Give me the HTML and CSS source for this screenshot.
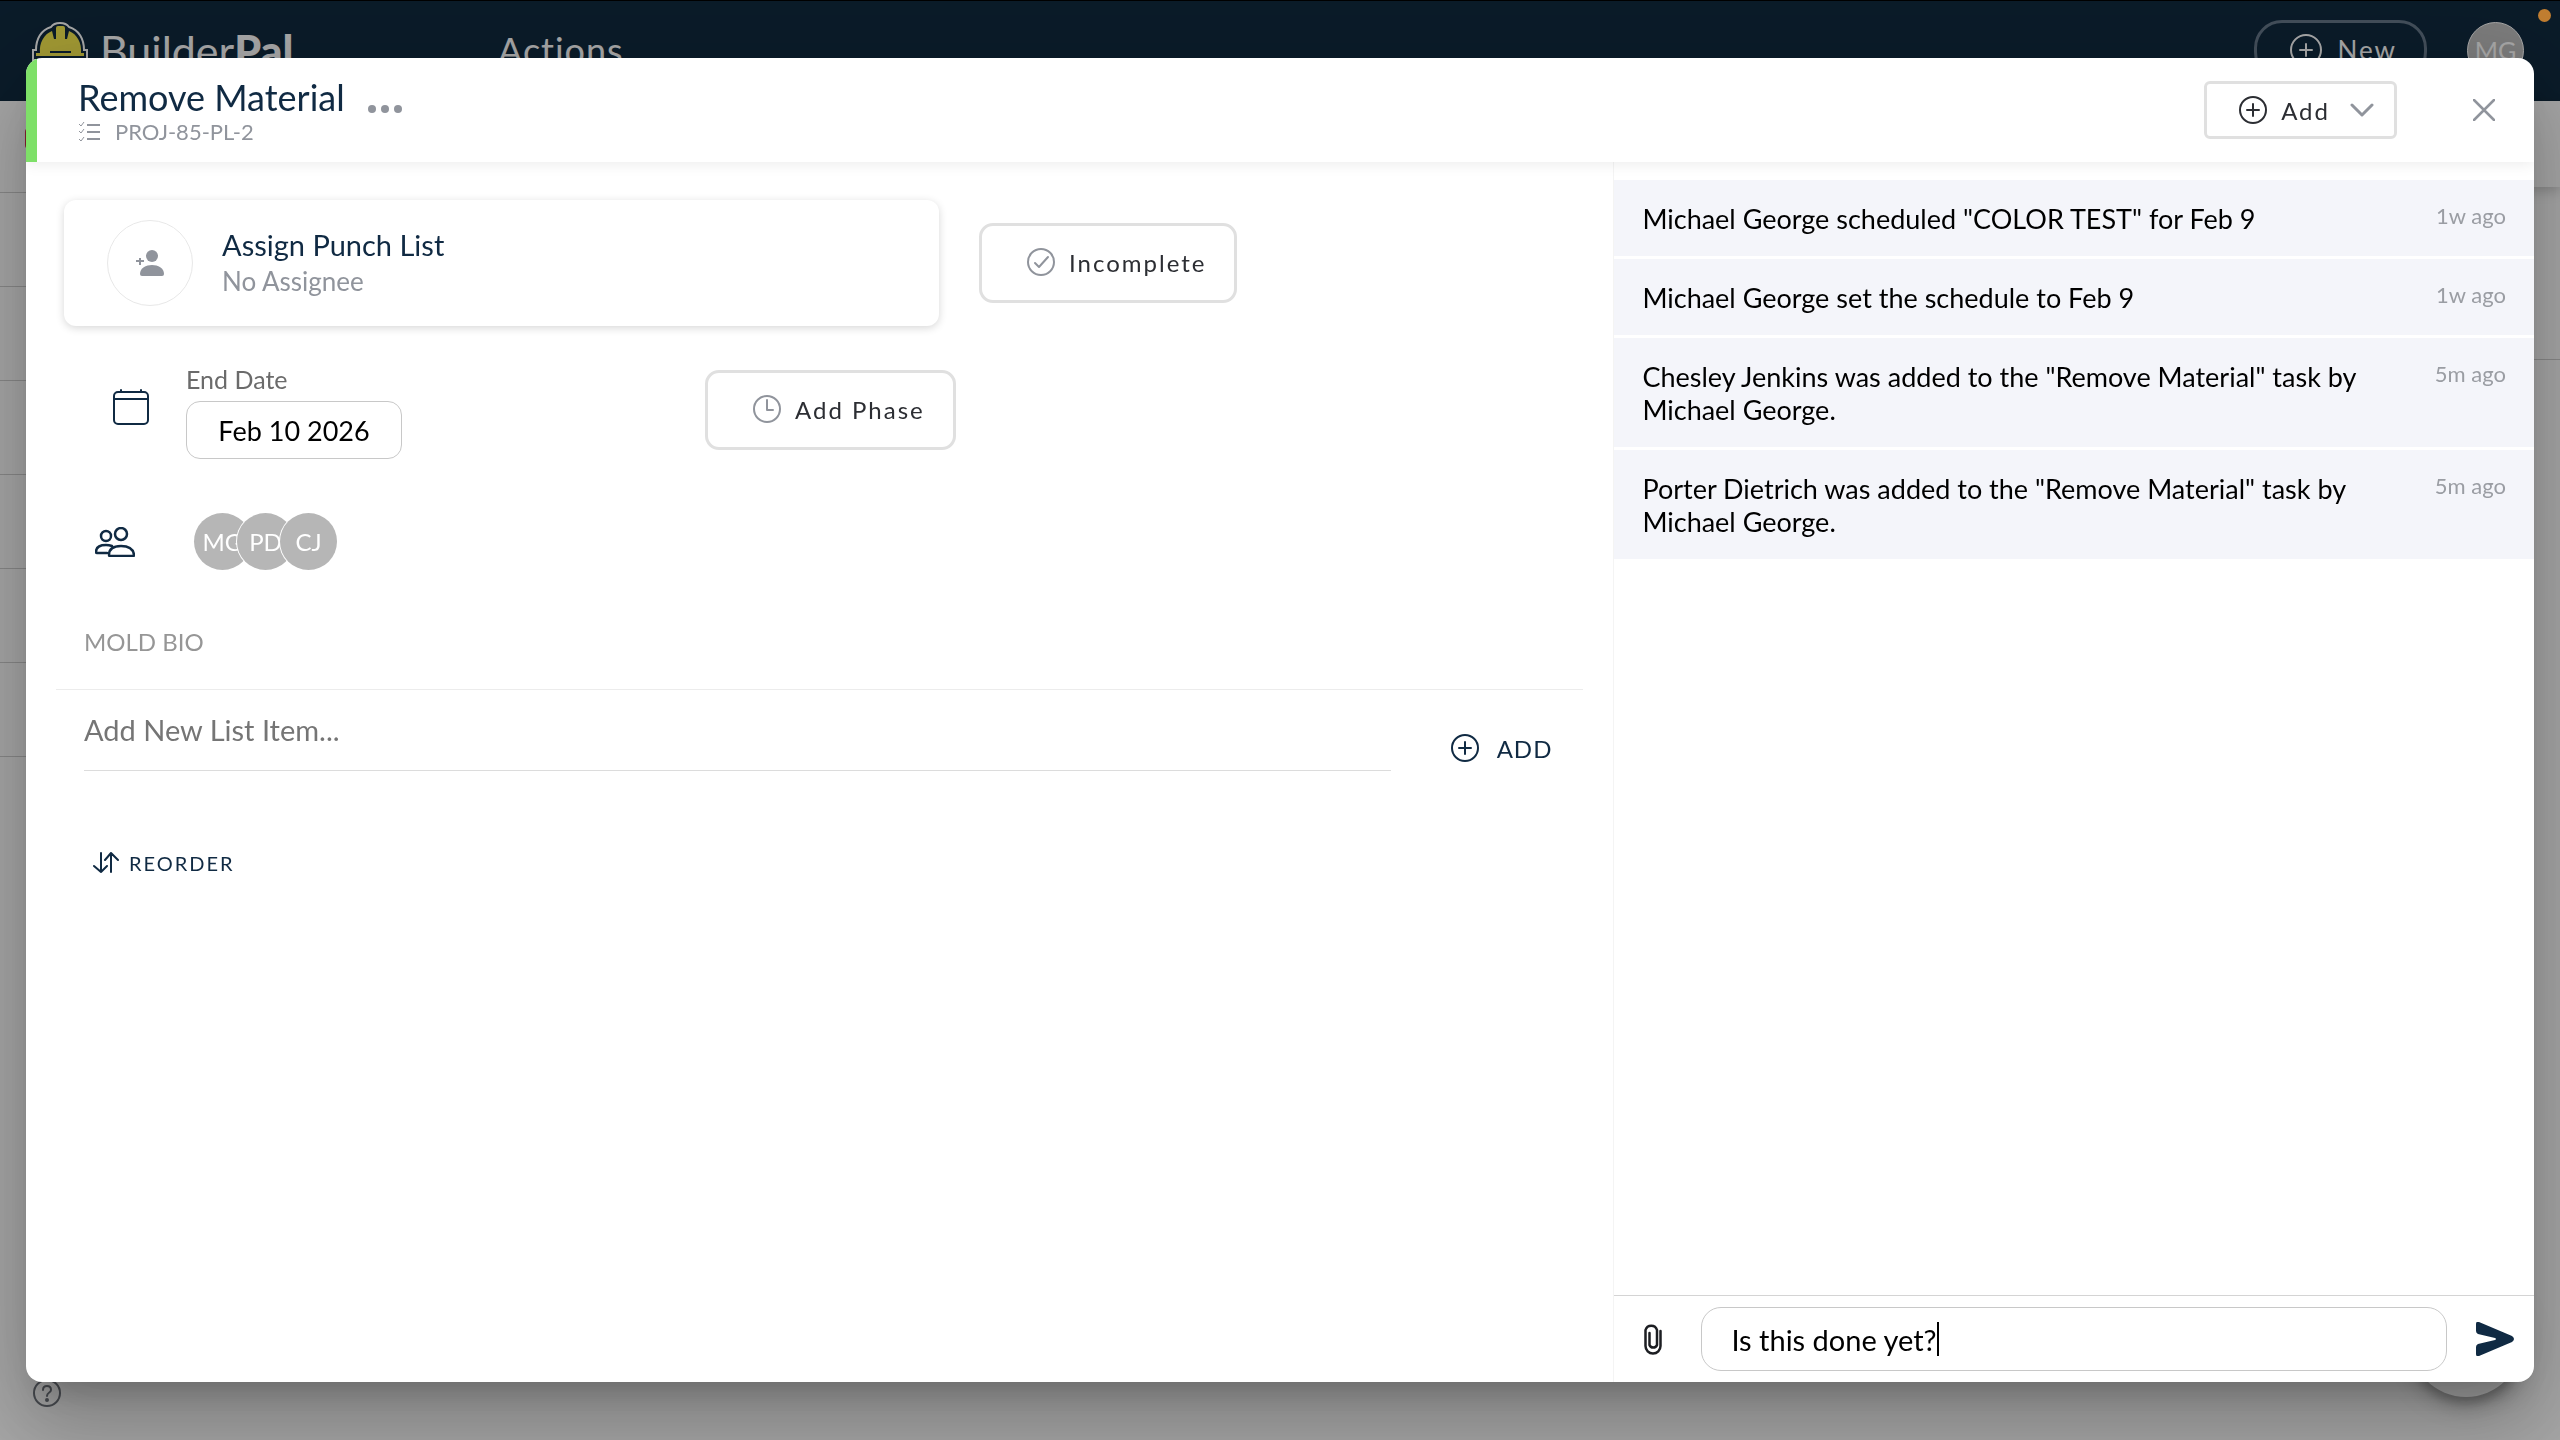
FILE: index.html
```html
<!DOCTYPE html>
<html lang="en">
<head>
  <meta charset="UTF-8">
  <meta name="viewport" content="width=device-width, initial-scale=1.0">
  <title>BuilderPal - Actions</title>
  <link rel="stylesheet" href="styles.css">
</head>
<body>
  <!-- App behind the modal -->
  <div class="app">
    <header class="navbar">
      <a class="brand" href="#">
        <svg class="brand-logo" viewBox="0 0 56 56">
          <path d="M1 38V28H4C4 17 9 8 19 5C21 2 24 1 28 1S35 2 37 5C47 8 52 17 52 28H55V38Z" fill="#102a3f" stroke="#fff" stroke-width="2"/>
          <path d="M8 31C7 21 12 12 20 9L22 17H24V6Q24 4 26 4H31Q33 4 33 6V17H35L37 9C45 12 50 21 49 31Z" fill="#f5e94f"/>
          <path d="M4 31H52V34H4Z" fill="#f5e94f"/>
          <path d="M18 30H39" stroke="#102a3f" stroke-width="2"/>
        </svg>
        <span>Builder<b>Pal</b></span>
      </a>
      <span class="page-title">Actions</span>
      <button class="new-btn" type="button">
        <svg width="32" height="32" viewBox="0 0 32 32" fill="none" stroke="currentColor" stroke-width="2" stroke-linecap="round">
          <circle cx="16" cy="16" r="15"/>
          <path d="M16 10V22M10 16H22"/>
        </svg>
        New
      </button>
      <span class="user-avatar">MG</span>
    </header>
    <div class="workspace">
      <ul class="side-list">
        <li><span class="badge"></span></li>
        <li></li>
        <li></li>
        <li></li>
        <li></li>
        <li></li>
        <li></li>
      </ul>
      <main class="board">
        <div class="toolbar"></div>
        <div class="board-row"></div>
      </main>
    </div>
    <button class="help-btn" type="button" aria-label="Help">
      <svg width="28" height="28" viewBox="0 0 28 28" fill="none" stroke="currentColor" stroke-width="2" stroke-linecap="round">
        <circle cx="14" cy="14" r="13"/>
        <path d="M10 11Q10 7 14 7T18 11C18 14 14 13 14 17"/>
        <circle cx="14" cy="21" r="1"/>
      </svg>
    </button>
    <button class="fab" type="button" aria-label="Chat"></button>
  </div>
  <div class="backdrop"></div>
  <span class="status-dot"></span>

  <section class="modal" role="dialog" aria-labelledby="taskTitle">
    <header class="modal-header">
      <div class="heading">
        <div class="title-row">
          <h1 id="taskTitle">Remove Material</h1>
          <button class="icon-btn more" type="button" aria-label="More">
            <svg width="36" height="10" viewBox="0 0 36 10" fill="currentColor">
              <circle cx="5" cy="5" r="4"/>
              <circle cx="18" cy="5" r="4"/>
              <circle cx="31" cy="5" r="4"/>
            </svg>
          </button>
        </div>
        <div class="task-id">
          <svg width="23" height="22" viewBox="0 0 23 22" fill="none" stroke="currentColor" stroke-width="2">
            <path d="M9 4H22M9 11H22M9 18H22"/>
            <path d="M1 3L3 5L6 1M1 10L3 12L6 8M1 18L3 20L6 16" stroke-width="1"/>
          </svg>
          <span>PROJ-85-PL-2</span>
        </div>
      </div>
      <button class="add-menu" type="button">
        <svg width="28" height="28" viewBox="0 0 28 28" fill="none" stroke="currentColor" stroke-width="2" stroke-linecap="round">
          <circle cx="14" cy="14" r="13"/>
          <path d="M14 8V20M8 14H20"/>
        </svg>
        <span>Add</span>
        <svg class="chevron" width="24" height="14" viewBox="0 0 24 14" fill="none" stroke="currentColor" stroke-width="3" stroke-linecap="round" stroke-linejoin="round">
          <path d="M2 2L12 12L22 2"/>
        </svg>
      </button>
      <button class="icon-btn" type="button" aria-label="Close">
        <svg width="22" height="22" viewBox="0 0 22 22" fill="none" stroke="currentColor" stroke-width="2.5" stroke-linecap="round">
          <path d="M1 1L21 21M21 1L1 21"/>
        </svg>
      </button>
    </header>

    <div class="modal-body">
      <div class="details">
        <div class="assign-row">
          <button class="assign-card" type="button">
            <span class="assign-icon">
              <svg width="28" height="26" viewBox="0 0 28 26" fill="currentColor">
                <circle cx="16" cy="6" r="6"/>
                <path d="M4 24C4 18 10 15 16 15S28 18 28 24Q28 26 26 26H6Q4 26 4 24Z"/>
                <path d="M4 8V15M0 11H8" stroke="currentColor" stroke-width="2"/>
              </svg>
            </span>
            <span class="assign-text">
              <span class="assign-title">Assign Punch List</span>
              <span class="assign-sub">No Assignee</span>
            </span>
          </button>
          <button class="outline-btn" type="button">
            <svg width="28" height="28" viewBox="0 0 28 28" fill="none" stroke="currentColor" stroke-width="2" stroke-linecap="round" stroke-linejoin="round">
              <circle cx="14" cy="14" r="13"/>
              <path d="M8 15L12 19L21 9"/>
            </svg>
            Incomplete
          </button>
        </div>

        <div class="date-row">
          <svg class="row-icon" width="36" height="36" viewBox="0 0 36 36" fill="none" stroke="currentColor" stroke-width="2" stroke-linecap="round">
            <rect x="1" y="3" width="34" height="32" rx="4"/>
            <path d="M1 10H35M8 1V3M28 1V3"/>
          </svg>
          <div class="end-date">
            <label for="endDate">End Date</label>
            <input type="text" id="endDate" value="Feb 10 2026">
          </div>
          <button class="outline-btn" type="button">
            <svg width="28" height="28" viewBox="0 0 28 28" fill="none" stroke="currentColor" stroke-width="2" stroke-linecap="round" stroke-linejoin="round">
              <circle cx="14" cy="14" r="13"/>
              <path d="M14 5V15H20"/>
            </svg>
            Add Phase
          </button>
        </div>

        <div class="people-row">
          <svg width="40" height="30" viewBox="0 0 40 30" fill="none" stroke="currentColor" stroke-width="2.5" stroke-linejoin="round" stroke-linecap="round">
            <ellipse cx="26" cy="7" rx="6" ry="6"/>
            <path d="M14 28Q14 19 26 19T39 28Q39 29 38 29H15Q14 29 14 28Z"/>
            <ellipse cx="11" cy="9" rx="5" ry="5"/>
            <path d="M17 19Q14 18 11 18Q1 18 1 25Q1 26 2 26H12"/>
          </svg>
          <div class="avatars">
            <span>MG</span>
            <span>PD</span>
            <span>CJ</span>
          </div>
        </div>

        <h2 class="list-title">MOLD BIO</h2>
        <form class="new-item">
          <input type="text" placeholder="Add New List Item..." aria-label="Add New List Item">
          <button class="text-btn" type="button">
            <svg width="28" height="28" viewBox="0 0 28 28" fill="none" stroke="currentColor" stroke-width="2" stroke-linecap="round">
              <circle cx="14" cy="14" r="13"/>
              <path d="M14 8V20M8 14H20"/>
            </svg>
            ADD
          </button>
        </form>
        <button class="text-btn reorder" type="button">
          <svg width="26" height="22" viewBox="0 0 26 22" fill="none" stroke="currentColor" stroke-width="2" stroke-linecap="round" stroke-linejoin="round">
            <path d="M8 1V20M1 14L8 20L14 14M18 20V1M12 8L18 1L25 8"/>
          </svg>
          REORDER
        </button>
      </div>

      <aside class="activity">
        <ul class="feed">
          <li>
            <p>Michael George scheduled "COLOR TEST" for Feb 9</p>
            <time>1w ago</time>
          </li>
          <li>
            <p>Michael George set the schedule to Feb 9</p>
            <time>1w ago</time>
          </li>
          <li>
            <p>Chesley Jenkins was added to the "Remove Material" task by Michael George.</p>
            <time>5m ago</time>
          </li>
          <li>
            <p>Porter Dietrich was added to the "Remove Material" task by Michael George.</p>
            <time>5m ago</time>
          </li>
        </ul>
        <form class="composer">
          <button class="icon-btn attach" type="button" aria-label="Attach file">
            <svg width="18" height="32" viewBox="0 0 18 32" fill="none" stroke="currentColor" stroke-width="2.5" stroke-linecap="round">
              <path d="M16.500 8V23A7.500 7.500 0 0 1 1.500 23V7A6 6 0 0 1 13 7V22A4 4 0 0 1 5.500 22V10"/>
            </svg>
          </button>
          <div class="message-box">
            <input type="text" value="Is this done yet?" aria-label="Message">
            <span class="caret"></span>
          </div>
          <button class="icon-btn send" type="submit" aria-label="Send">
            <svg width="38" height="34" viewBox="0 0 38 34" fill="currentColor">
              <path d="M3 0L36 14Q40 17 36 20L3 34Q0 35 0 32V25Q0 23 2 22L19 18Q21 17 19 16L2 12Q0 11 0 9V2Q0 -1 3 0Z"/>
            </svg>
          </button>
        </form>
      </aside>
    </div>
  </section>
</body>
</html>
```
FILE: styles.css
```css
* {
  box-sizing: border-box;
}
body {
  margin: 0;
  font-family: Lato, "Liberation Sans", sans-serif;
  color: #000;
  background-color: #fff;
}
button, input {
  font-family: inherit;
  color: inherit;
  background: none;
  border: none;
  padding: 0;
  outline: none;
}
button {
  cursor: pointer;
}
ul {
  list-style: none;
  margin: 0;
  padding: 0;
}
svg {
  display: block;
  flex: none;
}

/* App */
.app {
  min-height: 100vh;
  display: flex;
  flex-direction: column;
}
.navbar {
  display: flex;
  align-items: center;
  height: 101px;
  padding: 0 36px 2px 32px;
  border-top: 1px solid #000;
  background-color: #102a3f;
  color: #fff;
}
.brand {
  display: flex;
  align-items: center;
  gap: 12px;
  flex: 0 0 466px;
  color: inherit;
  font-size: 43px;
  text-decoration: none;
}
.brand-logo {
  width: 56px;
  height: 56px;
}
.brand b {
  font-weight: 900;
}
.page-title {
  flex: 1;
  font-size: 36px;
  letter-spacing: 1px;
}
.new-btn {
  display: flex;
  align-items: center;
  gap: 16px;
  height: 60px;
  padding: 0 27px 0 33px;
  border: 3px solid #66788a;
  border-radius: 28px;
  font-size: 26px;
  letter-spacing: 2px;
}
.user-avatar {
  display: flex;
  align-items: center;
  justify-content: center;
  width: 57px;
  height: 57px;
  margin-left: 40px;
  border: 1px solid #fff;
  border-radius: 50%;
  background-color: #bdbdbd;
  font-size: 25px;
}
.workspace {
  flex: 1;
  display: grid;
  grid-template-columns: 466px 1fr;
}
.side-list li {
  height: 94px;
  padding: 27px 25px;
  border-bottom: 1px solid #d0d0d0;
}
.side-list li:first-child {
  height: 92px;
}
.badge {
  display: block;
  width: 60px;
  height: 21px;
  border-radius: 4px;
  background-color: #d32f4f;
}
.toolbar {
  height: 86px;
  box-shadow: 0 4px 12px rgba(0, 0, 0, 0.2);
}
.board-row {
  height: 173px;
  border-bottom: 1px solid #d0d0d0;
}
.help-btn {
  position: fixed;
  left: 33px;
  bottom: 33px;
  color: #70757d;
}
.fab {
  position: fixed;
  right: 38px;
  bottom: 43px;
  width: 112px;
  height: 112px;
  border-radius: 50%;
  background-color: #fff;
  box-shadow: 0 6px 10px rgba(0, 0, 0, 0.2), 0 12px 20px rgba(0, 0, 0, 0.14), 0 2px 36px rgba(0, 0, 0, 0.12);
}
.backdrop {
  position: fixed;
  inset: 0;
  background-color: rgba(0, 0, 0, 0.35);
}
.status-dot {
  position: fixed;
  top: 9px;
  right: 9px;
  width: 13px;
  height: 13px;
  border-radius: 50%;
  background-color: #c27e31;
}

/* Modal */
.modal {
  position: fixed;
  inset: 58px 26px;
  display: flex;
  flex-direction: column;
  overflow: hidden;
  border-radius: 16px;
  background-color: #fff;
  box-shadow: 0 22px 30px -14px rgba(0, 0, 0, 0.2), 0 48px 76px 6px rgba(0, 0, 0, 0.14), 0 18px 92px 16px rgba(0, 0, 0, 0.12);
}
.modal-header {
  position: relative;
  z-index: 1;
  display: flex;
  align-items: center;
  height: 104px;
  padding: 0 39px 0 41px;
  border-left: 11px solid #7ee068;
  box-shadow: 0 2px 14px rgba(0, 0, 0, 0.08);
}
.heading {
  flex: 1;
}
.title-row, .task-id {
  display: flex;
  align-items: center;
}
.title-row {
  gap: 22px;
}
h1 {
  margin: 0;
  font-size: 36px;
  font-weight: 400;
  line-height: 44px;
  color: #102a43;
}
.icon-btn {
  color: #90949c;
}
.more {
  padding-top: 24px;
}
.task-id {
  gap: 14px;
  font-size: 22px;
  line-height: 26px;
  color: #90949c;
}
.add-menu {
  display: flex;
  align-items: center;
  gap: 14px;
  height: 58px;
  margin-right: 76px;
  padding: 0 20px 0 32px;
  border: 3px solid #e0e0e0;
  border-radius: 6px;
  font-size: 24px;
  letter-spacing: 2px;
  color: #2c2e33;
}
.chevron {
  margin-left: 6px;
  color: #90949c;
}
.modal-body {
  flex: 1;
  min-height: 0;
  display: grid;
  grid-template-columns: 19fr 11fr;
}

/* Task details */
.details {
  padding: 38px 30px 0;
  border-right: 1px solid #f4f4f4;
  color: #102a43;
}
.assign-row {
  display: flex;
  align-items: center;
  gap: 40px;
  margin-left: 8px;
}
.assign-card {
  display: flex;
  align-items: center;
  gap: 29px;
  flex: 0 1 875px;
  padding: 20px 43px;
  border-radius: 12px;
  text-align: left;
  box-shadow: 0 2px 8px rgba(0, 0, 0, 0.16);
}
.assign-icon {
  display: flex;
  align-items: center;
  justify-content: center;
  width: 86px;
  height: 86px;
  border: 1px solid #e8e8e8;
  border-radius: 50%;
  color: #90949c;
}
.assign-text {
  display: flex;
  flex-direction: column;
  line-height: 36px;
}
.assign-title {
  font-size: 29px;
}
.assign-sub {
  font-size: 26px;
  color: #90949c;
}
.outline-btn {
  display: flex;
  align-items: center;
  gap: 14px;
  height: 80px;
  padding: 0 28px 2px 45px;
  border: 3px solid #e0e0e0;
  border-radius: 14px;
  font-size: 24px;
  letter-spacing: 2px;
  color: #2c2e33;
}
.outline-btn svg {
  color: #90949c;
}
.date-row {
  display: flex;
  align-items: center;
  margin: 35px 0 0 57px;
}
.row-icon {
  margin-bottom: 6px;
}
.end-date {
  display: flex;
  flex-direction: column;
  gap: 4px;
  width: 216px;
  margin: 0 303px 0 37px;
}
.end-date label {
  font-size: 25px;
  line-height: 36px;
  color: #6b6b6b;
}
.end-date input {
  width: 100%;
  height: 58px;
  border: 1px solid #c8c8c8;
  border-radius: 14px;
  font-size: 27px;
  text-align: center;
  color: #000;
}
.people-row {
  display: flex;
  align-items: center;
  gap: 59px;
  margin: 54px 0 0 39px;
}
.avatars {
  display: flex;
}
.avatars span {
  display: flex;
  align-items: center;
  justify-content: center;
  width: 57px;
  height: 57px;
  margin-right: -14px;
  border-radius: 50%;
  background-color: #b6b6b6;
  box-shadow: 0 0 0 1px #fff;
  font-size: 24px;
  color: #fff;
}
.list-title {
  margin: 54px 0 0;
  padding: 0 28px 29px;
  border-bottom: 1px solid #ececec;
  font-size: 24px;
  font-weight: 400;
  line-height: 36px;
  color: #969696;
}
.new-item {
  display: flex;
  align-items: flex-end;
  gap: 60px;
  padding: 0 31px 0 28px;
}
.new-item input {
  flex: 1;
  min-width: 0;
  height: 81px;
  padding-bottom: 2px;
  border-bottom: 1px solid #dcdcdc;
  font-size: 29px;
}
.new-item input::placeholder {
  color: #757575;
}
.text-btn {
  display: flex;
  align-items: center;
  gap: 18px;
  height: 46px;
  font-size: 24px;
  letter-spacing: 1px;
  color: #102a43;
}
.reorder {
  gap: 10px;
  margin: 69px 0 0 37px;
  font-size: 20px;
  letter-spacing: 2px;
}

/* Activity feed */
.activity {
  display: flex;
  flex-direction: column;
}
.feed {
  flex: 1;
  display: flex;
  flex-direction: column;
  gap: 3px;
  padding-top: 18px;
}
.feed li {
  display: flex;
  gap: 40px;
  padding: 22px 28px 21px;
  background-color: #f4f5fa;
}
.feed p {
  flex: 1;
  margin: 0;
  font-size: 27px;
  line-height: 33px;
}
.feed time {
  font-size: 22px;
  line-height: 28px;
  color: #9a9da3;
}
.composer {
  display: flex;
  align-items: center;
  height: 87px;
  padding: 0 20px 0 30px;
  border-top: 1px solid #d4d4d4;
}
.message-box {
  flex: 1;
  display: flex;
  align-items: center;
  height: 64px;
  margin: 0 29px 0 39px;
  padding: 0 29px;
  border: 1px solid #c8c8c8;
  border-radius: 20px;
}
.message-box input {
  field-sizing: content;
  font-size: 29px;
}
.caret {
  width: 2px;
  height: 34px;
  background-color: #000;
}
.attach {
  color: #1c1e22;
}
.send {
  color: #102a43;
}
```
